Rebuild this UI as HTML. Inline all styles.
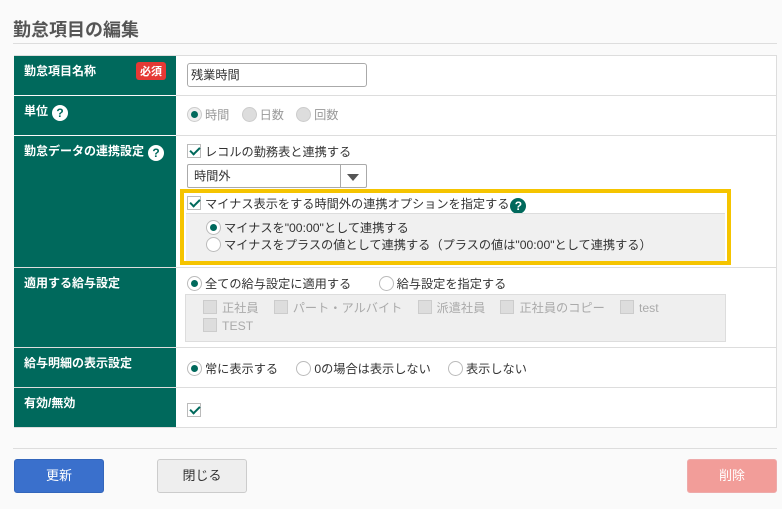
<!DOCTYPE html>
<html><head><meta charset="utf-8"><style>
*{box-sizing:border-box;margin:0;padding:0}
body{width:782px;height:509px;background:#fafafa;font-family:"Liberation Sans","Noto Sans CJK JP",sans-serif;font-size:12.2px;color:#333;position:relative;overflow:hidden}
.a{position:absolute}
h1{position:absolute;left:13px;top:16px;font-size:18px;font-weight:bold;color:#555}
.lbl{position:absolute;left:14px;width:162px;background:#00695c;color:#fff;font-weight:bold;padding:6px 0 0 10px;font-size:12px}
.val{position:absolute;left:176px;width:601px;background:#fff}
.q{display:inline-block;width:16px;height:16px;border-radius:50%;background:#fff;color:#00695c;font-size:12px;font-weight:bold;text-align:center;line-height:16px;vertical-align:-2px;margin-left:4px}
.rad{display:inline-block;width:15px;height:15px;border-radius:50%;border:1px solid #bbb;background:#fff;vertical-align:-3px;position:relative;margin-right:3px}
.rad.on::after{content:"";position:absolute;left:3px;top:3px;width:7px;height:7px;border-radius:50%;background:#00695c}
.rad.dis{background:#ddd;border-color:#ccc}
.cb{display:inline-block;width:14px;height:14px;border:1px solid #bbb;background:#fff;vertical-align:-2px;position:relative;margin-right:4px}
.cb.on::after{content:"";position:absolute;left:4px;top:0px;width:4px;height:8px;border:solid #00695c;border-width:0 2px 2px 0;transform:rotate(45deg)}
.cb.dis{background:#ddd;border-color:#ccc;margin-right:5px}
.g{margin-left:3px}
.btn{position:absolute;top:459px;height:34px;width:90px;border-radius:3px;text-align:center;line-height:32px;font-size:13px}
</style></head><body>
<h1>勤怠項目の編集</h1>
<div class="a" style="left:13px;top:43px;width:764px;height:1px;background:#ddd"></div>

<div class="lbl" style="top:56px;height:39px">勤怠項目名称<span class="a" style="left:122px;top:6px;background:#e53935;color:#fff;font-size:11px;padding:1px 4px;border-radius:3px">必須</span></div>
<div class="lbl" style="top:96px;height:39px">単位<span class="q">?</span></div>
<div class="lbl" style="top:136px;height:131px">勤怠データの連携設定<span class="q">?</span></div>
<div class="lbl" style="top:268px;height:79px">適用する給与設定</div>
<div class="lbl" style="top:348px;height:39px">給与明細の表示設定</div>
<div class="lbl" style="top:388px;height:39px">有効/無効</div>

<div class="val" style="top:56px;height:39px"></div>
<div class="val" style="top:96px;height:39px"></div>
<div class="val" style="top:136px;height:131px"></div>
<div class="val" style="top:268px;height:79px"></div>
<div class="val" style="top:348px;height:39px"></div>
<div class="val" style="top:388px;height:39px"></div>
<div class="a" style="left:176px;top:95px;width:601px;height:1px;background:#ddd"></div>
<div class="a" style="left:176px;top:135px;width:601px;height:1px;background:#ddd"></div>
<div class="a" style="left:14px;top:267px;width:763px;height:1px;background:#ddd"></div>
<div class="a" style="left:14px;top:347px;width:763px;height:1px;background:#ddd"></div>
<div class="a" style="left:14px;top:387px;width:763px;height:1px;background:#ddd"></div>
<div class="a" style="left:14px;top:427px;width:763px;height:1px;background:#ddd"></div>
<div class="a" style="left:14px;top:55px;width:763px;height:1px;background:#ddd"></div>
<div class="a" style="left:776px;top:55px;width:1px;height:373px;background:#ddd"></div>

<div class="a" style="left:187px;top:63px;width:180px;height:24px;border:1px solid #aaa;border-radius:3px;background:#fff;padding:2px 3px;line-height:18px">残業時間</div>

<div class="a" style="left:187px;top:105px;color:#999"><span class="rad on dis" style="background:#eee"></span>時間　<span class="rad dis"></span>日数　<span class="rad dis"></span>回数</div>

<div class="a" style="left:187px;top:142px"><span class="cb on"></span>レコルの勤務表と連携する</div>
<div class="a" style="left:187px;top:164px;width:180px;height:24px;border:1px solid #aaa;border-radius:2px;background:#fff;padding:0 6px;line-height:22px">時間外<span class="a" style="left:152px;top:0;width:1px;height:22px;background:#aaa"></span><span class="a" style="left:159px;top:9px;width:0;height:0;border-left:6px solid transparent;border-right:6px solid transparent;border-top:7px solid #555"></span></div>

<div class="a" style="left:180px;top:189px;width:551px;height:76px;border:4px solid #f5c400;background:#fff">
  <div class="a" style="left:3px;top:1px;white-space:nowrap"><span class="cb on"></span>マイナス表示をする時間外の連携オプションを指定する<span class="q" style="background:#00695c;color:#fff;margin-left:1px">?</span></div>
  <div class="a" style="left:2px;top:20px;width:539px;height:48px;background:#f0f0f0;border-top:1px solid #ddd"></div>
  <div class="a" style="left:22px;top:27px;white-space:nowrap;line-height:17px"><span class="rad on"></span>マイナスを"00:00"として連携する<br><span class="rad"></span>マイナスをプラスの値として連携する（プラスの値は"00:00"として連携する）</div>
</div>

<div class="a" style="left:187px;top:274px;white-space:nowrap"><span class="rad on"></span>全ての給与設定に適用する　　<span class="rad g"></span>給与設定を指定する</div>
<div class="a" style="left:185px;top:294px;width:541px;height:48px;background:#efefef;border:1px solid #ddd;color:#aaa;padding:4px 0 0 17px;line-height:18px;white-space:nowrap"><span class="cb dis"></span>正社員　<span class="cb dis g"></span>パート・アルバイト　<span class="cb dis g"></span>派遣社員　<span class="cb dis g"></span>正社員のコピー　<span class="cb dis g"></span>test<br><span class="cb dis"></span>TEST</div>

<div class="a" style="left:187px;top:359px;white-space:nowrap"><span class="rad on"></span>常に表示する　<span class="rad" style="margin-left:6px"></span>0の場合は表示しない　<span class="rad" style="margin-left:5px"></span>表示しない</div>
<div class="a" style="left:187px;top:403px"><span class="cb on"></span></div>

<div class="a" style="left:13px;top:448px;width:764px;height:1px;background:#ddd"></div>
<div class="btn" style="left:14px;background:#3a70cc;color:#fff;border:1px solid #3366bb">更新</div>
<div class="btn" style="left:157px;background:#eee;border:1px solid #ccc;color:#333">閉じる</div>
<div class="btn" style="left:687px;background:#f29d99;color:#fff;border:1px solid #eaa">削除</div>
</body></html>
